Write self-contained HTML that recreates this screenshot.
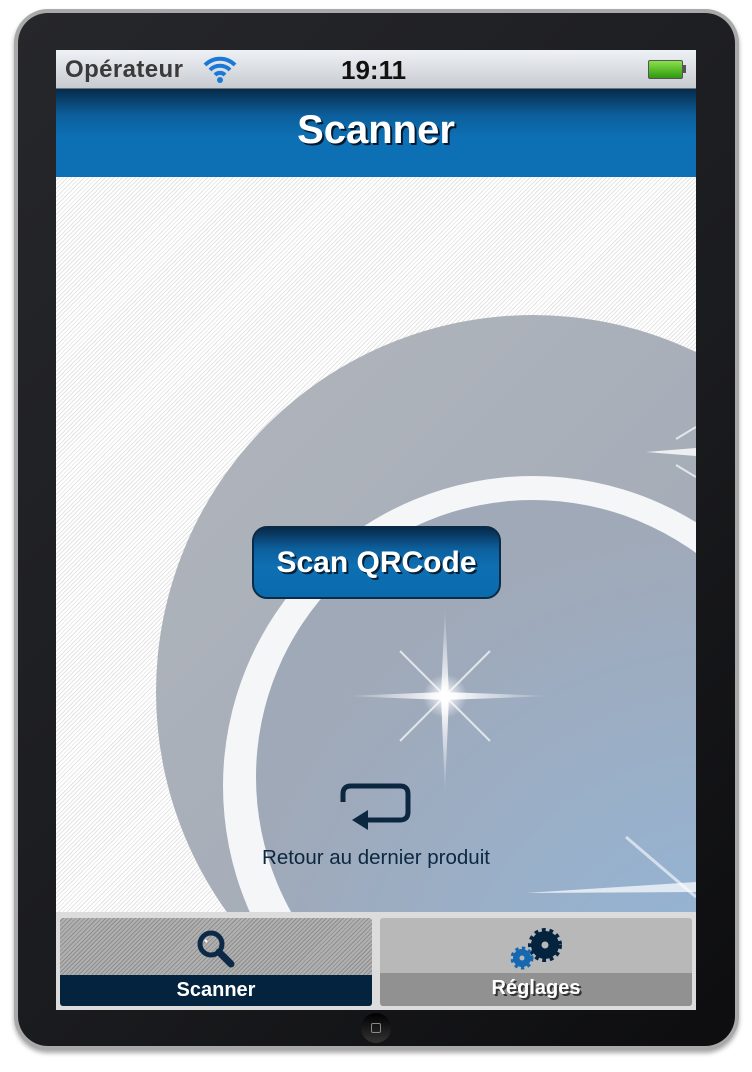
<!DOCTYPE html>
<html><head><meta charset="utf-8"><style>
*{margin:0;padding:0;box-sizing:border-box}
html,body{width:752px;height:1072px;overflow:hidden}
body{background:#fff;position:relative;font-family:"Liberation Sans",sans-serif}
.bezel{position:absolute;left:14px;top:9px;width:725px;height:1041px;border-radius:34px;background:#a9a9a9;box-shadow:0 3px 5px rgba(0,0,0,.35)}
.bezel-in{position:absolute;left:18px;top:13px;width:717px;height:1033px;border-radius:30px;background:linear-gradient(135deg,#26272b,#1a1b1e 60%,#0d0d0f)}
.screen{position:absolute;left:56px;top:50px;width:640px;height:960px;background:#fff;overflow:hidden}
.status{position:absolute;left:0;top:0;width:640px;height:39px;background:linear-gradient(#eef2f5,#c7ccd1);border-bottom:1px solid #6d7378}
.status .op{position:absolute;left:9px;top:6px;font-size:24px;font-weight:bold;color:#3a3a3a;letter-spacing:0.4px}
.status .time{position:absolute;left:285px;top:5px;font-size:26px;font-weight:bold;color:#111}
.nav{position:absolute;top:39px;left:0;width:640px;height:88px;background:linear-gradient(#062b4b 0,#0c5f9c 30%,#0d70b4 55%,#0d70b4)}
.nav h1{position:absolute;width:100%;top:19px;text-align:center;font-size:40px;color:#fff;text-shadow:2px 2px 0 #02182c}
.content{position:absolute;top:127px;left:0;width:640px;height:735px;background:repeating-linear-gradient(135deg,#fff 0 2px,#e4e4e4 2px 3px)}
.btn{position:absolute;left:196px;top:349px;width:249px;height:73px;border-radius:15px;border:2px solid #0b2a45;background:linear-gradient(#062a4a,#0d5f9d 30%,#0e6fb2 55%,#0a6aae);color:#fff;font-weight:bold;font-size:30px;text-align:center;line-height:70px;text-shadow:2px 2px 0 #062036}
.retour{position:absolute;top:669px;width:640px;text-align:center;font-size:20.5px;color:#0c2740;left:0}
.tabbar{position:absolute;top:862px;left:0;width:640px;height:98px;background:#dcdcdc}
.tab{position:absolute;top:6px;height:88px;width:312px;border-radius:3px;overflow:hidden}
.t1{left:4px;background:repeating-linear-gradient(135deg,#b0b0b0 0 2px,#8e8e8e 2px 3px)}
.t2{left:324px;background:#b8b8b8}
.lab{position:absolute;left:0;bottom:0;width:100%;height:31px;text-align:center;font-weight:bold;font-size:20px;color:#fff;line-height:30px}
.t1 .lab{background:#03233f}
.t2 .lab{background:#919191;height:33px;text-shadow:2px 2px 0 #333}
</style></head><body>
<div class="bezel"></div><div class="bezel-in"></div>
<div style="position:absolute;left:361px;top:1013px;width:30px;height:30px;border-radius:50%;background:linear-gradient(#000,#333)"><div style="position:absolute;left:10px;top:10px;width:10px;height:10px;border:1.5px solid #888;border-radius:2px"></div></div>
<div class="screen">
 <div class="status"><span class="op">Opérateur</span>
  <svg style="position:absolute;left:147px;top:6px" width="34" height="28" viewBox="0 0 34 28"><path d="M2 9 A21 21 0 0 1 32 9" stroke="#1a78d6" stroke-width="4" fill="none"/><path d="M7 14 A14 14 0 0 1 27 14" stroke="#1a78d6" stroke-width="4" fill="none"/><path d="M12 19 A7 7 0 0 1 22 19" stroke="#1a78d6" stroke-width="4" fill="none"/><circle cx="17" cy="24" r="3" fill="#1a78d6"/></svg>
  <span class="time">19:11</span>
  <div style="position:absolute;left:592px;top:10px;width:35px;height:19px;border:1.5px solid #555;border-radius:2px;background:linear-gradient(#8be04a,#2f9a0e)"></div><div style="position:absolute;left:627px;top:15px;width:3px;height:8px;background:#555"></div>
 </div>
 <div class="nav"><h1>Scanner</h1></div>
 <div class="content">
  <svg width="640" height="735" style="position:absolute;left:0;top:0">
   <defs>
   <linearGradient id="o" x1="0" y1="0" x2="1" y2="1"><stop offset="0" stop-color="#b2b6bc"/><stop offset="1" stop-color="#98a3b4"/></linearGradient>
   <radialGradient id="g" cx="0.85" cy="0.95" r="0.9"><stop offset="0" stop-color="#92b6da"/><stop offset="1" stop-color="#a0a9b8"/></radialGradient>
   <radialGradient id="s"><stop offset="0" stop-color="#fff"/><stop offset="1" stop-color="#fff" stop-opacity="0"/></radialGradient>
   <linearGradient id="v" x1="0" y1="0" x2="0" y2="1"><stop offset="0" stop-color="#fff" stop-opacity="0"/><stop offset=".5" stop-color="#fff"/><stop offset="1" stop-color="#fff" stop-opacity="0"/></linearGradient>
   <linearGradient id="h"><stop offset="0" stop-color="#fff" stop-opacity="0"/><stop offset=".5" stop-color="#fff"/><stop offset="1" stop-color="#fff" stop-opacity="0"/></linearGradient>
   </defs>
   <circle cx="477" cy="515" r="377" fill="url(#o)"/>
   <circle cx="477" cy="609" r="310" fill="#f4f6f8"/>
   <circle cx="477" cy="600" r="277" fill="url(#g)"/>
   <polygon points="389,429 393,519 389,617 385,519" fill="url(#v)"/>
   <polygon points="287,519 389,515 495,519 389,523" fill="url(#h)"/>
   <path d="M344 474 L434 564 M434 474 L344 564" stroke="#fff" stroke-width="2" opacity=".7"/>
   <circle cx="389" cy="519" r="22" fill="url(#s)"/>
   <polygon points="590,275 640,271 640,279" fill="#fff" opacity=".8"/>
   <path d="M620 262 L640 250 M620 288 L640 300" stroke="#fff" stroke-width="2" opacity=".7"/>
   <path d="M570 660 L640 720" stroke="#fff" stroke-width="3" opacity=".6"/>
   <polygon points="470,716 640,705 640,715" fill="#fff" opacity=".7"/>
  </svg>
  <div class="btn">Scan QRCode</div>
  <svg style="position:absolute;left:282px;top:605px" width="75" height="55" viewBox="0 0 75 55"><path d="M5 20 V12 Q5 4 13 4 H62 Q70 4 70 12 V30 Q70 38 62 38 H28" stroke="#0c2740" stroke-width="5" fill="none"/><path d="M30 28 L14 38 L30 48 Z" fill="#0c2740"/></svg>
  <div class="retour">Retour au dernier produit</div>
 </div>
 <div class="tabbar">
  <div class="tab t1">
   <svg style="position:absolute;left:134px;top:10px" width="44" height="42" viewBox="0 0 44 42"><circle cx="17" cy="16" r="11" stroke="#0c2a47" stroke-width="5" fill="none"/><path d="M25 24 L37 36" stroke="#0c2a47" stroke-width="7" stroke-linecap="round"/><path d="M11 12 L13 14" stroke="#fff" stroke-width="2"/></svg>
   <div class="lab">Scanner</div></div>
  <div class="tab t2">
   <svg style="position:absolute;left:128px;top:8px" width="60" height="50" viewBox="0 0 60 50">
    <circle cx="37" cy="19" r="14" fill="#04233f" stroke="#04233f" stroke-width="6" stroke-dasharray="3.5 3.5"/><circle cx="37" cy="19" r="3.5" fill="#b8b8b8"/>
    <circle cx="14" cy="32" r="9" fill="#1669b0" stroke="#1669b0" stroke-width="5" stroke-dasharray="3 3"/><circle cx="14" cy="32" r="2.5" fill="#b8b8b8"/></svg>
   <div class="lab">Réglages</div></div>
 </div>
</div>
</body></html>
